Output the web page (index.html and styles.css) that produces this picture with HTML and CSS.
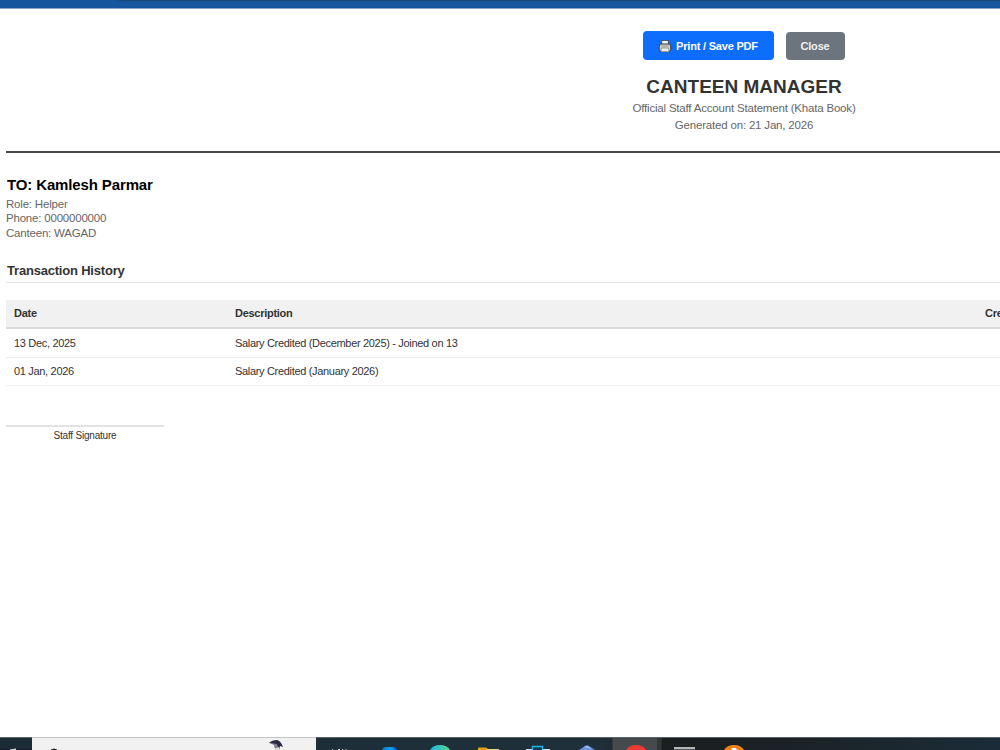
FILE: index.html
```html
<!DOCTYPE html>
<html lang="en">
<head>
<meta charset="utf-8">
<title>Canteen Manager</title>
<link rel="stylesheet" href="styles.css">
</head>
<body>
<div class="window-edge"></div>
<main class="statement">
  <div class="actions">
    <button class="btn print">
      <svg class="printer" viewBox="0 0 14 14"><path d="M3.7 6V1.5h6.6V6" fill="#f5f5f5" stroke="#444" stroke-width=".8"/><rect x="1.2" y="5" width="11.6" height="7.4" rx="2" fill="#d2d0ca" stroke="#3a3a3a"/><path d="M3.4 7h7.2" stroke="#8a8a88" stroke-width=".8"/><path d="M3.4 9h7.2l.5 3.8H2.9z" fill="#eee" stroke="#666" stroke-width=".6"/></svg>
      <span>Print / Save PDF</span>
    </button>
    <button class="btn close">Close</button>
  </div>
  <header class="heading">
    <h1>CANTEEN MANAGER</h1>
    <p class="sub">Official Staff Account Statement (Khata Book)</p>
    <p class="generated">Generated on: 21 Jan, 2026</p>
  </header>
  <section class="recipient">
    <h2>TO: Kamlesh Parmar</h2>
    <p>Role: Helper</p>
    <p>Phone: 0000000000</p>
    <p>Canteen: WAGAD</p>
  </section>
  <h3 class="history">Transaction History</h3>
  <table class="ledger">
    <thead><tr><th class="date">Date</th><th class="desc">Description</th><th>Credit</th></tr></thead>
    <tbody>
      <tr><td>13 Dec, 2025</td><td>Salary Credited (December 2025) - Joined on 13</td><td></td></tr>
      <tr class="last"><td>01 Jan, 2026</td><td>Salary Credited (January 2026)</td><td></td></tr>
    </tbody>
  </table>
  <div class="signature">Staff Signature</div>
</main>
<footer class="taskbar">
  <svg width="1000" height="13" viewBox="0 0 1000 13">
    <defs>
      <linearGradient id="bar"><stop offset="0" stop-color="#1c2c37"/><stop offset=".6" stop-color="#20303a"/><stop offset=".65" stop-color="#1c1e20"/><stop offset=".74" stop-color="#1b2023"/><stop offset="1" stop-color="#1b2c38"/></linearGradient>
      <linearGradient id="edge"><stop offset="0" stop-color="#22b5e8"/><stop offset="1" stop-color="#55d889"/></linearGradient>
      <linearGradient id="copilot"><stop offset="0" stop-color="#1279d2"/><stop offset=".6" stop-color="#159be9"/><stop offset="1" stop-color="#1647c8"/></linearGradient>
    </defs>
    <rect width="1000" height="13" fill="url(#bar)"/>
    <path d="M10 13v-.6l6-.9V13z" fill="#ddd"/>
    <rect x="32" width="284" height="13" fill="#f1f1f1"/>
    <path d="M32 .5h284" stroke="#c4c4c4"/>
    <path d="M51 13q3-2 6 0" fill="#222" stroke="#222"/>
    <path d="M269 6q3-3 8-3 4 1 6 7l-3-1-1 4h-3l1-4q-2-2-8-3z" fill="#292943"/><path d="M270 6l7 1 1 3-3 2-1-4z" fill="#817b99"/><path d="M276 11l3-1v3h-4z" fill="#ddd"/>
    <path d="M332 12.5h1M338 12.5h2M342 12.5h1M346 12v1" stroke="#c1cbd0"/>
    <path d="M382 13q1-3 4-3h7q3 0 4 3z" fill="url(#copilot)"/>
    <path d="M430 13q3-5 10-5t10 5z" fill="url(#edge)"/>
    <path d="M478 10.5h8l2 1.5h11v1h-21z" fill="#e5a30c"/><path d="M487 12h12v1h-12z" fill="#e9d28b"/>
    <path d="M526 12h24v1h-24z" fill="#d9e5eb"/><path d="M532.5 13V9.5h10V13" fill="#1c3947" stroke="#20b4ef" stroke-width="1.4"/>
    <path d="M579 13l6-4q2-1.5 4 0l6 4z" fill="#6e91de"/><path d="M584 10q3-2 5 0l2 2z" fill="#9dc0f2"/>
    <rect x="612.5" width="45" height="13" fill="#474a4c"/><rect x="657.5" width="4" height="13" fill="#343738"/>
    <path d="M626 13q3-5 10-5t10 5z" fill="#eb3b32"/>
    <rect x="674" y="10" width="21" height="3" fill="#b5b5b7"/><path d="M674 12.5h21" stroke="#555761"/>
    <path d="M724 13q3-5 10-5t10 5z" fill="#ef8214"/><path d="M731 13l1-2h4l1 2z" fill="#fff"/>
    <path d="M0 .5h32M316 .5h684" stroke="#56626b"/>
    <path d="M0 12.5h10M16 12.5h16" stroke="#17152a"/>
  </svg>
</footer>
</body>
</html>
```

FILE: styles.css
```css
* { box-sizing: border-box; }
body { margin: 0; width: 1000px; height: 750px; overflow: hidden; display: flex; flex-direction: column; background: #fff; color: #333; font-family: "Liberation Sans", Arial, sans-serif; }
h1, h2, h3, p { margin: 0; }
.window-edge { flex: none; height: 9px; background: linear-gradient(to right, transparent 114px, #174777 122px) 0 0 / 100% 1px no-repeat, #14559d; border-bottom: 1px solid #86a9cc; }
.statement { flex: 1; width: 1476px; margin-left: 6px; padding-top: 22px; }
.actions { display: flex; justify-content: center; align-items: flex-end; gap: 12px; height: 29px; padding-right: 1px; }
.btn { border: 0; padding: 0; display: flex; align-items: center; justify-content: center; border-radius: 4px; color: #fff; font: bold 11px "Liberation Sans", Arial, sans-serif; letter-spacing: -0.2px; }
.print { width: 131px; height: 29px; gap: 4px; background: #0d6efd; }
.close { width: 59px; height: 28px; background: #6c757d; color: #f0f0f0; }
.printer { width: 14px; height: 14px; }
.heading { height: 93px; padding-top: 15px; border-bottom: 2px solid #47484a; text-align: center; }
h1 { font-size: 19px; line-height: 24px; }
.sub, .generated { color: #666; font-size: 11.5px; letter-spacing: -0.19px; line-height: 17px; }
.sub { padding-top: 1px; }
.recipient { padding-top: 23px; height: 104px; color: #666; font-size: 11.5px; letter-spacing: -0.2px; line-height: 14.3px; }
h2 { color: #000; font-size: 15px; letter-spacing: -0.13px; line-height: 17px; padding: 0 1px 0; margin-bottom: 4px; }
.history { height: 26px; padding-left: 1px; border-bottom: 1px solid #e4e4e4; font-size: 13px; letter-spacing: -0.2px; line-height: 27px; }
.ledger { width: 100%; margin-top: 17px; border-collapse: separate; border-spacing: 0; table-layout: fixed; font-size: 11px; letter-spacing: -0.32px; }
.ledger th { height: 29px; padding: 0 8px 1px; text-align: left; background: #f1f1f1; border-bottom: 2px solid #dadada; letter-spacing: -0.28px; }
.ledger td { height: 28.5px; padding: 1px 8px 0; border-bottom: 1px solid #eee; }
.ledger .last td { padding: 0 8px 1px; }
.date { width: 221px; }
.desc { width: 750px; }
.signature { width: 158px; margin-top: 39px; padding-top: 2px; border-top: 2px solid #e3e3e3; text-align: center; font-size: 10px; letter-spacing: -0.2px; line-height: 13px; }
.taskbar { flex: none; height: 13px; }
.taskbar svg { display: block; }
```
